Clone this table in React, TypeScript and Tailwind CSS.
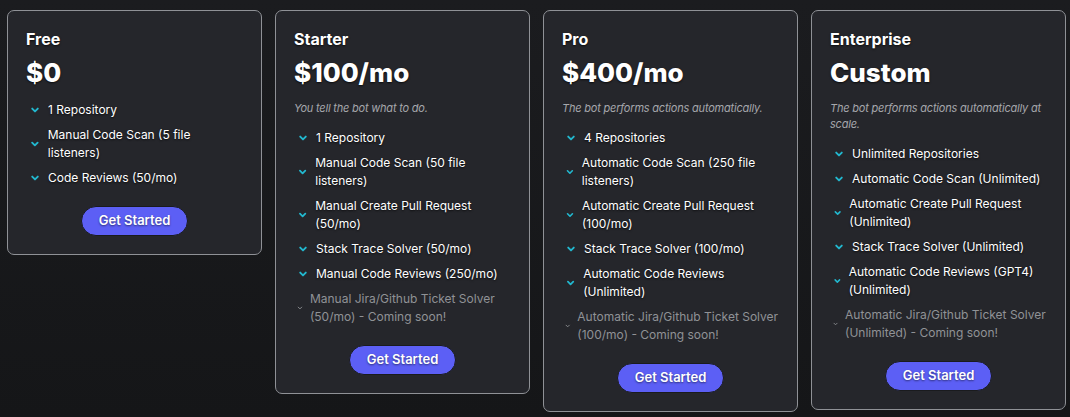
import React from "react";

type Item = { text: string; soon?: boolean };
type Plan = { name: string; price: string; desc?: string; items: Item[] };

const plans: Plan[] = [
  {
    name: "Free",
    price: "$0",
    items: [
      { text: "1 Repository" },
      { text: "Manual Code Scan (5 file listeners)" },
      { text: "Code Reviews (50/mo)" },
    ],
  },
  {
    name: "Starter",
    price: "$100/mo",
    desc: "You tell the bot what to do.",
    items: [
      { text: "1 Repository" },
      { text: "Manual Code Scan (50 file listeners)" },
      { text: "Manual Create Pull Request (50/mo)" },
      { text: "Stack Trace Solver (50/mo)" },
      { text: "Manual Code Reviews (250/mo)" },
      { text: "Manual Jira/Github Ticket Solver (50/mo) - Coming soon!", soon: true },
    ],
  },
  {
    name: "Pro",
    price: "$400/mo",
    desc: "The bot performs actions automatically.",
    items: [
      { text: "4 Repositories" },
      { text: "Automatic Code Scan (250 file listeners)" },
      { text: "Automatic Create Pull Request (100/mo)" },
      { text: "Stack Trace Solver (100/mo)" },
      { text: "Automatic Code Reviews (Unlimited)" },
      { text: "Automatic Jira/Github Ticket Solver (100/mo) - Coming soon!", soon: true },
    ],
  },
  {
    name: "Enterprise",
    price: "Custom",
    desc: "The bot performs actions automatically at scale.",
    items: [
      { text: "Unlimited Repositories" },
      { text: "Automatic Code Scan (Unlimited)" },
      { text: "Automatic Create Pull Request (Unlimited)" },
      { text: "Stack Trace Solver (Unlimited)" },
      { text: "Automatic Code Reviews (GPT4) (Unlimited)" },
      { text: "Automatic Jira/Github Ticket Solver (Unlimited) - Coming soon!", soon: true },
    ],
  },
];

function Chevron({ soon }: { soon?: boolean }) {
  return (
    <svg
      width="16"
      height="16"
      viewBox="0 0 16 16"
      fill="none"
      className={soon ? "text-[#909296]" : "text-[#22b8cf]"}
    >
      <path
        d="M5.2 6.6L8 9.4L10.8 6.6"
        stroke="currentColor"
        strokeWidth={soon ? 1.5 : 1.9}
        strokeLinecap="round"
        strokeLinejoin="round"
      />
    </svg>
  );
}

function Card({ plan }: { plan: Plan }) {
  return (
    <div className="w-[255px] rounded-[7px] border border-[#8f9196] bg-[#25262b] px-[18px] pt-[17px] pb-[18px]">
      <div className="text-[16px] font-bold leading-[22px] text-white [text-shadow:0_1px_2px_rgba(0,0,0,0.7)]">
        {plan.name}
      </div>
      <div className="mt-[8px] text-[26px] font-extrabold leading-[30px] text-white [text-shadow:0_1px_2px_rgba(0,0,0,0.7)]">
        {plan.price}
      </div>
      {plan.desc && (
        <div className="mt-[12px] text-[11px] italic leading-[16px] tracking-[-0.2px] text-[#a6a7ab]">
          {plan.desc}
        </div>
      )}
      <ul className="mt-[13px] flex flex-col gap-[7px]">
        {plan.items.map((it, i) => (
          <li key={i} className="flex items-center gap-[5px] pl-[1px]">
            <Chevron soon={it.soon} />
            <span
              className={`text-[12px] leading-[18px] ${
                it.soon ? "text-[#909296]" : "text-white [text-shadow:0_1px_2px_rgba(0,0,0,0.7)]"
              }`}
            >
              {it.text}
            </span>
          </li>
        ))}
      </ul>
      <div className="mt-[19px] flex justify-center">
        <button className="h-[30px] w-[107px] rounded-full border border-[#1a1b1e] bg-[#5c5ff5] text-[13px] font-semibold text-white [text-shadow:0_1px_2px_rgba(0,0,0,0.5)]">
          Get Started
        </button>
      </div>
    </div>
  );
}

export default function App() {
  return (
    <div
      className="flex min-h-[417px] w-[1070px] items-start gap-[13px] bg-gradient-to-b from-[#1b1c1f] to-[#151618] pl-[7px] pt-[10px]"
      style={{ fontFamily: "Inter, 'Noto Sans', sans-serif" }}
    >
      {plans.map((p) => (
        <Card key={p.name} plan={p} />
      ))}
    </div>
  );
}
